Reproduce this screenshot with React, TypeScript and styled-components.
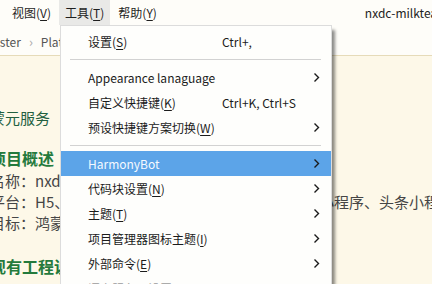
import styled, { createGlobalStyle } from "styled-components";

const GlobalStyle = createGlobalStyle`
  html, body {
    margin: 0;
    padding: 0;
  }
  body {
    width: 432px;
    height: 284px;
    overflow: hidden;
    background: #fdf8e8;
    font-family: "Noto Sans CJK SC", "Noto Sans", sans-serif;
  }
  u {
    text-decoration-thickness: 1px;
    text-underline-offset: 2px;
  }
`;

type Entry =
  | { sep: true }
  | {
      sep?: false;
      label: string;
      mnemonic?: string;
      shortcut?: string;
      sub?: boolean;
      active?: boolean;
      disabled?: boolean;
    };

const toolsMenu: Entry[] = [
  { label: "设置", mnemonic: "S", shortcut: "Ctrl+," },
  { sep: true },
  { label: "Appearance lanaguage", sub: true },
  { label: "自定义快捷键", mnemonic: "K", shortcut: "Ctrl+K, Ctrl+S" },
  { label: "预设快捷键方案切换", mnemonic: "W", sub: true },
  { sep: true },
  { label: "HarmonyBot", sub: true, active: true },
  { label: "代码块设置", mnemonic: "N", sub: true },
  { label: "主题", mnemonic: "T", sub: true },
  { label: "项目管理器图标主题", mnemonic: "I", sub: true },
  { label: "外部命令", mnemonic: "E", sub: true },
  { label: "语言服务器设置", mnemonic: "L", disabled: true },
];

export default function App() {
  return (
    <Window>
      <GlobalStyle />
      <MenuBar>
        <TopItem>
          视图(<u>V</u>)
        </TopItem>
        <TopItem $open>
          工具(<u>T</u>)
        </TopItem>
        <TopItem>
          帮助(<u>Y</u>)
        </TopItem>
        <WindowTitle>nxdc-milktea - HBuilder X</WindowTitle>
      </MenuBar>

      <Breadcrumb>
        master <Crumb>›</Crumb> Platform
      </Breadcrumb>

      <Doc>
        <Lead>蒙元服务</Lead>
        <Heading>项目概述</Heading>
        <Line>名称：nxdc-milktea</Line>
        <Line>平台：H5、TV、微信小程序、支付宝小程序、QQ小程序、头条小程序</Line>
        <Line>目标：鸿蒙元服务</Line>
        <Heading $gap>现有工程说明</Heading>
      </Doc>

      <Dropdown>
        {toolsMenu.map((item, i) =>
          item.sep ? (
            <Separator key={i} />
          ) : (
            <Row key={i} $active={item.active} $disabled={item.disabled}>
              <span>
                {item.label}
                {item.mnemonic && (
                  <>
                    (<u>{item.mnemonic}</u>)
                  </>
                )}
              </span>
              <span>{item.shortcut}</span>
              {item.sub ? (
                <svg width="7" height="11" viewBox="0 0 7 11">
                  <polyline
                    points="1.5,1.5 5.5,5.5 1.5,9.5"
                    fill="none"
                    stroke="#1a1a1a"
                    strokeWidth="1.4"
                  />
                </svg>
              ) : (
                <span />
              )}
            </Row>
          )
        )}
      </Dropdown>
    </Window>
  );
}

const Window = styled.div`
  position: relative;
  width: 432px;
  height: 284px;
  overflow: hidden;
  display: flex;
  flex-direction: column;
  background: #fdf8e8;
`;

const MenuBar = styled.div`
  display: flex;
  align-items: stretch;
  gap: 2px;
  height: 25px;
  padding-left: 6px;
  background: #fefdf9;
  white-space: nowrap;
  font-size: 12px;
  color: #1e1e1e;
`;

const TopItem = styled.div<{ $open?: boolean }>`
  display: flex;
  align-items: center;
  padding: 0 6px;
  background: ${p => (p.$open ? "#e9e9e7" : "transparent")};
`;

const WindowTitle = styled.div`
  display: flex;
  align-items: center;
  margin-left: 200px;
  color: #222;
`;

const Breadcrumb = styled.div`
  display: flex;
  align-items: center;
  gap: 8px;
  height: 28px;
  padding-top: 2px;
  margin-left: -18px;
  background: #fefdf9;
  border-bottom: 1px solid #e6dbb9;
  font-size: 12px;
  color: #555;
  white-space: nowrap;
`;

const Crumb = styled.span`
  color: #aaa;
  font-size: 13px;
`;

const Doc = styled.div`
  display: flex;
  flex-direction: column;
  margin-left: -10px;
  padding-top: 50px;
  white-space: nowrap;
`;

const Lead = styled.div`
  font-size: 15px;
  line-height: 24px;
  color: #22603f;
`;

const Heading = styled.div<{ $gap?: boolean }>`
  margin-top: ${p => (p.$gap ? "21px" : "16px")};
  font-size: 16px;
  line-height: 24px;
  font-weight: bold;
  color: #247a3c;
`;

const Line = styled.div`
  font-size: 15px;
  line-height: 21px;
  color: #454545;
`;

const Dropdown = styled.div`
  position: absolute;
  top: 25px;
  left: 60px;
  width: 270px;
  bottom: -40px;
  padding-top: 3px;
  background: #fefefc;
  border: 1px solid #dcdcdc;
  box-shadow: 4px 4px 3px -1px rgba(0, 0, 0, 0.45);
  font-size: 12px;
`;

const Row = styled.div<{ $active?: boolean; $disabled?: boolean }>`
  display: grid;
  grid-template-columns: 134px 1fr 7px;
  align-items: center;
  height: 25px;
  padding: 0 11px 0 27px;
  white-space: nowrap;
  background: ${p => (p.$active ? "#5ca4e8" : "transparent")};
  color: ${p => (p.$active ? "#f5f9ff" : p.$disabled ? "#9c9c9c" : "#1b1b1b")};
`;

const Separator = styled.div`
  height: 1px;
  margin: 5px 10px 5px 9px;
  background: #d2d2d2;
`;
